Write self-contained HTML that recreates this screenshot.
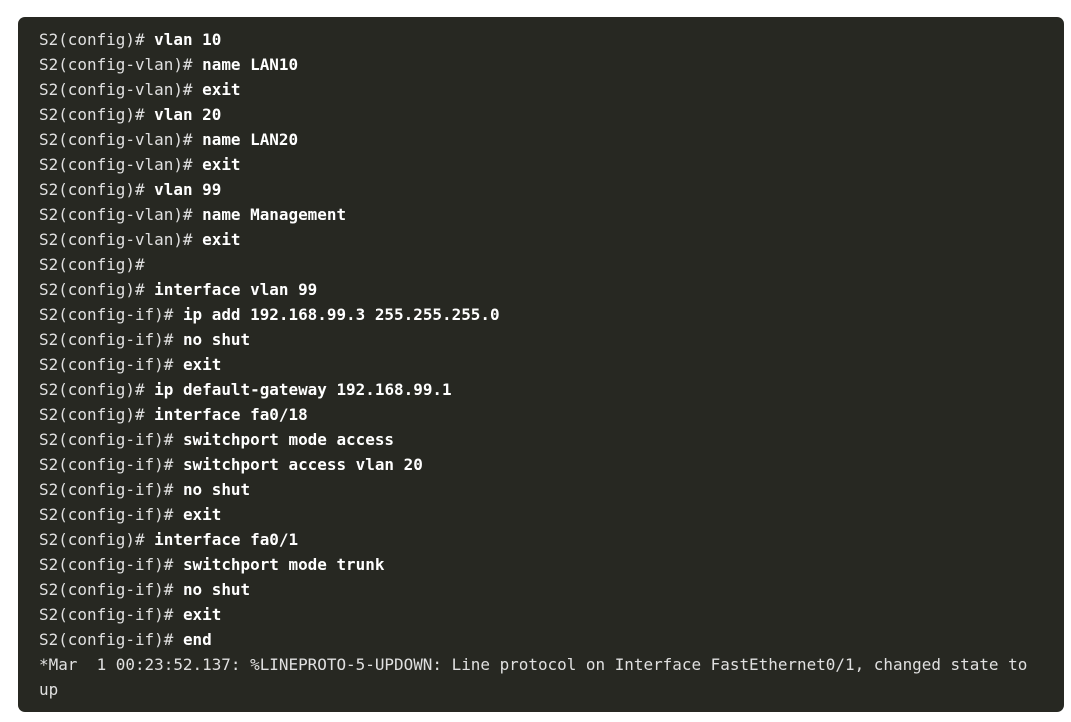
<!DOCTYPE html>
<html><head><style>
html,body{margin:0;padding:0;background:#fff;width:1071px;height:722px;overflow:hidden}
.box{position:absolute;left:18px;top:17px;width:1046px;height:695px;background:#272822;border-radius:7px}
pre{margin:0;position:absolute;left:39px;top:27px;font-family:"DejaVu Sans Mono","Liberation Mono",monospace;font-size:15.95px;line-height:25px;color:#e0e0e0;white-space:pre}
b{color:#fff;font-weight:bold}
</style></head><body>
<div class="box"></div>
<pre>S2(config)# <b>vlan 10</b>
S2(config-vlan)# <b>name LAN10</b>
S2(config-vlan)# <b>exit</b>
S2(config)# <b>vlan 20</b>
S2(config-vlan)# <b>name LAN20</b>
S2(config-vlan)# <b>exit</b>
S2(config)# <b>vlan 99</b>
S2(config-vlan)# <b>name Management</b>
S2(config-vlan)# <b>exit</b>
S2(config)#
S2(config)# <b>interface vlan 99</b>
S2(config-if)# <b>ip add 192.168.99.3 255.255.255.0</b>
S2(config-if)# <b>no shut</b>
S2(config-if)# <b>exit</b>
S2(config)# <b>ip default-gateway 192.168.99.1</b>
S2(config)# <b>interface fa0/18</b>
S2(config-if)# <b>switchport mode access</b>
S2(config-if)# <b>switchport access vlan 20</b>
S2(config-if)# <b>no shut</b>
S2(config-if)# <b>exit</b>
S2(config)# <b>interface fa0/1</b>
S2(config-if)# <b>switchport mode trunk</b>
S2(config-if)# <b>no shut</b>
S2(config-if)# <b>exit</b>
S2(config-if)# <b>end</b>
*Mar  1 00:23:52.137: %LINEPROTO-5-UPDOWN: Line protocol on Interface FastEthernet0/1, changed state to
up</pre>
</body></html>
